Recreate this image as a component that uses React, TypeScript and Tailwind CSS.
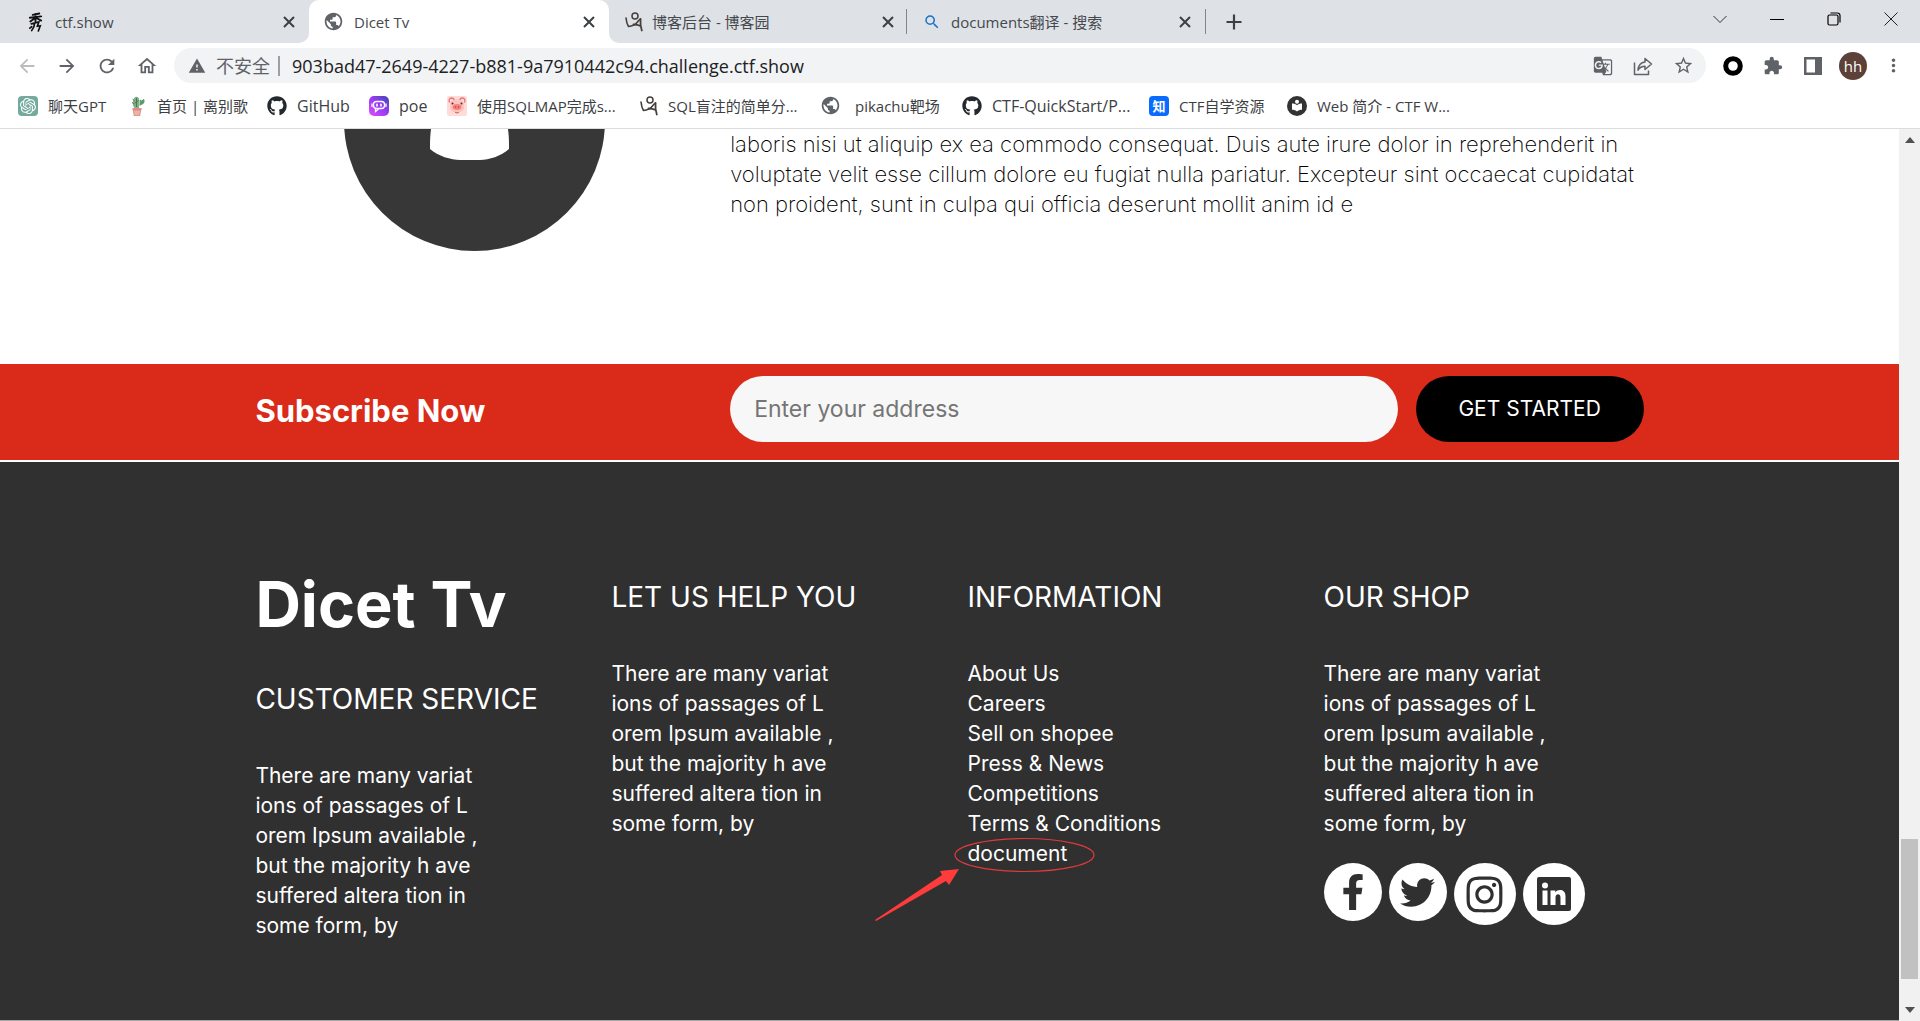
import type { ReactNode } from 'react';
import {
  MdArrowBack,
  MdArrowForward,
  MdRefresh,
  MdOutlineHome,
  MdWarning,
  MdGTranslate,
  MdStarBorder,
  MdExtension,
  MdMoreVert,
  MdPublic,
  MdSearch,
} from 'react-icons/md';
import { FaGithub, FaTwitter, FaFacebookF, FaInstagram } from 'react-icons/fa';
import { SiOpenai } from 'react-icons/si';

function CloseIcon() {
  return (
    <svg viewBox="0 0 12 12" className="size-3" stroke="#3c4043" strokeWidth="2" fill="none">
      <path d="M1 1l10 10M11 1L1 11" />
    </svg>
  );
}

function BrushIcon() {
  return (
    <svg viewBox="0 0 18 20" className="h-5 w-[17px]" stroke="#111" strokeWidth="2" fill="none" strokeLinecap="round">
      <path d="M6 2.500l7-1.500M3 5.500l12-1.500M9 1.500v8M9 5.500L3.500 9.500M9.500 5.500l5.500 3" />
      <path d="M4.500 12l8-2-1.500 4.500 3-.5-2 5.500M8 11.500c0 3-1 5-3 7.500M5 15l-2 1.500" strokeWidth="1.800" />
    </svg>
  );
}

function CnblogsIcon() {
  return (
    <svg viewBox="0 0 18 20" className="h-5 w-[18px]" fill="none" stroke="#46403c" strokeLinecap="round" strokeLinejoin="round">
      <circle cx="10" cy="4" r="3" strokeWidth="1.500" />
      <path d="M1 6c.3 3 1 6 2.500 8.500 3.500-.3 7-2 9-4.500 1-1.200 2-2.500 3-3" strokeWidth="1.600" />
      <path d="M15.500 7c-.3 4 .2 8 1.300 11.500M8.500 12.500c2.500 0 5 .5 7 1.500" strokeWidth="1.800" />
    </svg>
  );
}

function CactusIcon() {
  return (
    <svg viewBox="0 0 16 20" className="h-5 w-[18px]">
      <path d="M4 2.500C5 0 8.500 0 9 3v9H4.500C2 9 2.500 5 4 2.500z" fill="#7fae86" />
      <path d="M9.500 9V5c0-1.500 2-1.500 2-.2L13.500 3c1.500.3 1.500 4-.5 5l-3.500 2z" fill="#5f9a6d" />
      <path d="M2 6.500l2.500 1.500M2.500 3l2 1.500M6.500 2v9M8.500 4.500L5 7" stroke="#3d6b48" strokeWidth=".8" />
      <path d="M2.500 12h9v2.200h-9z" fill="#e58f86" />
      <path d="M3.300 14.200h7.400L9.800 20H4.200z" fill="#f0b0a6" stroke="#b5665d" strokeWidth=".5" />
    </svg>
  );
}

function PoeIcon() {
  return (
    <svg viewBox="0 0 20 20" className="size-5">
      <defs>
        <linearGradient id="poe" x1="1" y1="0" x2="0" y2="1">
          <stop offset="0" stopColor="#3f45b5" />
          <stop offset=".5" stopColor="#9a3cf5" />
          <stop offset="1" stopColor="#e54cff" />
        </linearGradient>
      </defs>
      <rect width="20" height="20" rx="5" fill="url(#poe)" />
      <rect x="4.500" y="5.500" width="11" height="7" rx="3" fill="none" stroke="#fff" strokeWidth="1.300" />
      <path d="M3 8v2.500M17 8v2.500M6.500 12.500v3l3-2.500" stroke="#fff" strokeWidth="1.300" fill="none" strokeLinecap="round" />
      <path d="M8 8.300v1.600M12 8.300v1.600" stroke="#fff" strokeWidth="1.600" strokeLinecap="round" />
    </svg>
  );
}

function PigIcon() {
  return (
    <svg viewBox="0 0 20 20" className="size-5">
      <rect width="20" height="20" rx="2" fill="#ffdcda" />
      <path d="M2.500 6.500C1.500 4 2.500 2 4.500 2c1.200 0 2.500 1 3 2M17.500 6.500C18.500 4 17.500 2 15.500 2c-1.200 0-2.500 1-3 2" stroke="#e8726c" strokeWidth="1.300" fill="none" />
      <path d="M3 8c0-6 14-6 14 0v4c0 6-14 6-14 0z" fill="#ffc2be" />
      <circle cx="5.500" cy="7.500" r="1" fill="#43302f" />
      <circle cx="14.500" cy="7.500" r="1" fill="#43302f" />
      <ellipse cx="10" cy="11" rx="4.500" ry="3" fill="#f4827c" />
      <circle cx="8.500" cy="11" r=".8" fill="#b8403c" />
      <circle cx="11.500" cy="11" r=".8" fill="#b8403c" />
      <path d="M8 16c1 1.200 3 1.200 4 0" stroke="#d5504a" fill="none" />
    </svg>
  );
}

function WikiIcon() {
  return (
    <svg viewBox="0 0 20 20" className="size-5">
      <circle cx="10" cy="10" r="10" fill="#333" />
      <circle cx="10" cy="5.800" r="2" fill="#fff" />
      <path d="M5 7.500c2 0 4 .6 5 1.800 1-1.200 3-1.800 5-1.800v6.200c-2 0-4 .6-5 1.800-1-1.200-3-1.800-5-1.800z" fill="#fff" />
    </svg>
  );
}

function ShareIcon() {
  return (
    <svg viewBox="0 0 20 20" className="size-5" fill="none" stroke="#5f6368" strokeWidth="1.500" strokeLinejoin="round">
      <path d="M1.500 6.500v12h14v-4" />
      <path d="M12 2.500l6.500 5.500L12 13.500v-3.300c-3.500 0-5.500 1.300-7 4 .3-4.500 2.600-7.700 7-8.200z" />
    </svg>
  );
}

function LinkedinGlyph() {
  return (
    <svg viewBox="0 0 34 34" className="size-[34px]">
      <rect width="34" height="34" rx="2" fill="#303030" />
      <g fill="#fff">
        <circle cx="8" cy="8.500" r="3" />
        <path d="M5.500 13.500h5V28h-5zM13.500 13.500h4.800v2c2.600-3.800 10.200-3.400 10.200 3.500v9h-5v-7.500c0-4.500-5-4-5 0V28h-5z" />
      </g>
    </svg>
  );
}

function Tab({ icon, title, shape }: { icon: ReactNode; title: string; shape: string }) {
  return (
    <div role="tab" className={`flex h-full items-center ${shape}`}>
      {icon}
      <span className="min-w-0 flex-1 truncate text-[15px] leading-5 text-[#45494d]">{title}</span>
      <button aria-label={`Close ${title}`}>
        <CloseIcon />
      </button>
    </div>
  );
}

function Bookmark({ icon, label, size }: { icon: ReactNode; label: string; size: string }) {
  return (
    <a href="#" className="flex items-center gap-2.5 text-[#3c4043]">
      {icon}
      <span className={`whitespace-nowrap leading-5 ${size}`}>{label}</span>
    </a>
  );
}

const bookmarks = [
  {
    label: '聊天GPT',
    size: 'text-[15px] w-[61px]',
    icon: (
      <span className="flex size-5 items-center justify-center rounded bg-[#74aa9c]">
        <SiOpenai size={16} color="#fff" />
      </span>
    ),
  },
  { label: '首页 | 离别歌', size: 'text-[15px] w-[90px]', icon: <CactusIcon /> },
  { label: 'GitHub', size: 'text-base w-[52px]', icon: <FaGithub size={20} color="#24292f" /> },
  { label: 'poe', size: 'text-base w-[28px]', icon: <PoeIcon /> },
  { label: '使用SQLMAP完成s...', size: 'text-[15px] w-[143px]', icon: <PigIcon /> },
  { label: 'SQL盲注的简单分...', size: 'text-[15px] w-[132px]', icon: <CnblogsIcon /> },
  { label: 'pikachu靶场', size: 'text-[15px] ml-1 w-[87px]', icon: <MdPublic size={21} color="#5f6368" /> },
  { label: 'CTF-QuickStart/P...', size: 'text-base w-[137px]', icon: <FaGithub size={20} color="#24292f" /> },
  {
    label: 'CTF自学资源',
    size: 'text-[15px] w-[88px]',
    icon: (
      <span className="flex size-5 items-center justify-center rounded bg-[#0a6cff] text-[13px] leading-5 font-bold text-white">
        知
      </span>
    ),
  },
  { label: 'Web 简介 - CTF W...', size: 'text-[15px] w-[142px]', icon: <WikiIcon /> },
];

function BrowserChrome() {
  return (
    <header className="border-b border-[#dadce0] bg-white font-['Open_Sans','Noto_Sans_CJK_SC',sans-serif]">
      <div className="flex h-[43px] items-stretch bg-[#dee1e6]">
        <div role="tablist" className="flex">
          <Tab icon={<BrushIcon />} title="ctf.show" shape="w-[309px] gap-[11px] pr-3.5 pl-[27px]" />
          <div className="relative">
            <svg viewBox="0 0 10 10" className="absolute bottom-0 -left-2.5 size-2.5" fill="#fff">
              <path d="M10 0v10H0A10 10 0 0 0 10 0z" />
            </svg>
            <Tab
              icon={<MdPublic size={21} color="#5f6368" />}
              title="Dicet Tv"
              shape="w-[300px] gap-2.5 rounded-t-[10px] bg-white pr-3.5 pl-3.5"
            />
            <svg viewBox="0 0 10 10" className="absolute -right-2.5 bottom-0 size-2.5" fill="#fff">
              <path d="M0 0v10h10A10 10 0 0 1 0 0z" />
            </svg>
          </div>
          <Tab icon={<CnblogsIcon />} title="博客后台 - 博客园" shape="w-[297px] gap-[9px] pr-3 pl-4" />
          <span className="h-[25px] w-px self-center bg-[#80868b]" />
          <Tab icon={<MdSearch size={18} color="#1a73c8" />} title="documents翻译 - 搜索" shape="w-[298px] gap-2.5 pr-3.5 pl-4" />
          <span className="h-[25px] w-px self-center bg-[#80868b]" />
        </div>
        <button aria-label="New tab" className="ml-5">
          <svg viewBox="0 0 16 16" className="size-4" stroke="#3c4043" strokeWidth="2.200">
            <path d="M8 .5v15M.5 8h15" />
          </svg>
        </button>
        <div className="ml-auto flex items-center gap-[43px] pr-[22px] pb-[5px]">
          <button aria-label="Search tabs">
            <svg viewBox="0 0 14 14" className="size-3.5" fill="none" stroke="#333">
              <path d="M.5 4L7 10.500 13.500 4" />
            </svg>
          </button>
          <button aria-label="Minimize">
            <svg viewBox="0 0 14 14" className="size-3.5" stroke="#000">
              <path d="M0 7.500h14" />
            </svg>
          </button>
          <button aria-label="Restore">
            <svg viewBox="0 0 14 14" className="size-3.5" fill="none" stroke="#000" strokeWidth="1.200">
              <rect x="1" y="3" width="10" height="10" rx="1.500" />
              <path d="M3.500 1h7A2.500 2.500 0 0 1 13 3.500v7" />
            </svg>
          </button>
          <button aria-label="Close window">
            <svg viewBox="0 0 14 14" className="size-3.5" stroke="#222">
              <path d="M.5.5l13 13M13.500.5l-13 13" />
            </svg>
          </button>
        </div>
      </div>

      <div className="flex items-center pt-[5px] pr-4 pl-4 text-[#5f6368]">
        <nav className="flex gap-[18px]">
          <button aria-label="Back" className="text-[#babcbe]"><MdArrowBack size={22} /></button>
          <button aria-label="Forward"><MdArrowForward size={22} /></button>
          <button aria-label="Reload"><MdRefresh size={22} /></button>
          <button aria-label="Home"><MdOutlineHome size={22} /></button>
        </nav>
        <div className="ml-4 flex h-[35px] flex-1 items-center rounded-full bg-[#f1f3f4] pr-3 pl-3.5">
          <MdWarning size={18} />
          <span className="ml-2.5 text-lg leading-6">不安全</span>
          <span className="mx-2 h-5 w-0.5 bg-[#9aa0a6]" />
          <input
            aria-label="Address"
            defaultValue="903bad47-2649-4227-b881-9a7910442c94.challenge.ctf.show"
            className="min-w-0 flex-1 bg-transparent pl-1 text-lg leading-6 text-[#202124] outline-none"
          />
          <div className="flex gap-5">
            <button aria-label="Translate"><MdGTranslate size={20} /></button>
            <button aria-label="Share"><ShareIcon /></button>
            <button aria-label="Bookmark"><MdStarBorder size={21} /></button>
          </div>
        </div>
        <div className="ml-[17px] flex items-center gap-5">
          <button aria-label="Recorder">
            <svg viewBox="0 0 20 20" className="size-5">
              <circle cx="10" cy="10" r="7.300" fill="#fff" stroke="#000" strokeWidth="5" />
            </svg>
          </button>
          <button aria-label="Extensions"><MdExtension size={20} /></button>
          <button aria-label="Side panel">
            <svg viewBox="0 0 20 20" className="size-5" fill="#5f6368">
              <path d="M1 1h18v18H1zM3.500 3.500v13H12v-13z" fillRule="evenodd" />
            </svg>
          </button>
          <button className="-mx-1 flex size-7 items-center justify-center rounded-full bg-[#5d4037] text-[15px] leading-5 text-white">
            hh
          </button>
          <button aria-label="Menu"><MdMoreVert size={21} /></button>
        </div>
      </div>

      <nav className="flex h-[45px] items-center gap-5 pl-[18px]">
        {bookmarks.map((b) => (
          <Bookmark key={b.label} {...b} />
        ))}
      </nav>
    </header>
  );
}

function Intro() {
  return (
    <section className="mx-auto grid w-3/4 grid-cols-12 pb-28">
      <div className="col-span-4 flex justify-center">
        <svg viewBox="0 0 261 123" className="h-[123px] w-[261px]" role="img" aria-label="Profile">
          <circle cx="130.500" cy="-8.500" r="130.500" fill="#373737" />
          <path d="M87 0h77c1 7 1 14 1 20-8 7-20 11-29 11h-20c-9 0-22-4-30-11 0-6 0-13 1-20z" fill="#fff" />
        </svg>
      </div>
      <p className="col-span-8 px-[18px] text-[22px] leading-[30px] font-extralight whitespace-nowrap text-black">
        laboris nisi ut aliquip ex ea commodo consequat. Duis aute irure dolor in reprehenderit in
        <br />
        voluptate velit esse cillum dolore eu fugiat nulla pariatur. Excepteur sint occaecat cupidatat
        <br />
        non proident, sunt in culpa qui officia deserunt mollit anim id e
      </p>
    </section>
  );
}

function Subscribe() {
  return (
    <section className="border-b-2 border-white bg-[#d92a1a]">
      <form className="mx-auto grid w-3/4 grid-cols-12 items-center pt-3 pb-[18px]">
        <label htmlFor="address" className="col-span-4 px-[18px] pt-1 text-[31px] leading-10 font-bold text-white">
          Subscribe Now
        </label>
        <div className="col-span-8 flex gap-[18px] px-[18px]">
          <input
            id="address"
            placeholder="Enter your address"
            className="h-[66px] min-w-0 flex-1 rounded-full bg-[#f7f7f7] px-6 text-[23px] text-[#757575] outline-none placeholder:text-[#757575]"
          />
          <button type="button" className="h-[66px] w-[228px] rounded-full bg-black text-[21px] text-white">
            GET STARTED
          </button>
        </div>
      </form>
    </section>
  );
}

function Heading({ children }: { children: ReactNode }) {
  return <h3 className="mb-[41px] text-[28px] leading-[42px] whitespace-nowrap">{children}</h3>;
}

function Blurb() {
  return (
    <p className="whitespace-nowrap">
      There are many variat
      <br />
      ions of passages of L
      <br />
      orem Ipsum available ,
      <br />
      but the majority h ave
      <br />
      suffered altera tion in
      <br />
      some form, by
    </p>
  );
}

const links = ['About Us', 'Careers', 'Sell on shopee', 'Press & News', 'Competitions', 'Terms & Conditions'];

function Footer() {
  return (
    <footer className="flex-1 border-b border-[#a5a5a5] bg-[#303030] text-[21px] leading-[30px] text-white">
      <div className="mx-auto grid w-3/4 grid-cols-4 pt-[110px]">
        <div className="px-[18px]">
          <h2 className="mb-[42px] text-[63px] leading-[64px] font-bold whitespace-nowrap">Dicet Tv</h2>
          <Heading>CUSTOMER SERVICE</Heading>
          <Blurb />
        </div>
        <div className="px-[18px] pt-1">
          <Heading>LET US HELP YOU</Heading>
          <Blurb />
        </div>
        <div className="px-[18px] pt-1">
          <Heading>INFORMATION</Heading>
          <ul>
            {links.map((l) => (
              <li key={l}>
                <a href="#">{l}</a>
              </li>
            ))}
            <li className="relative">
              <a href="#">document</a>
              <svg viewBox="0 0 222 86" className="pointer-events-none absolute -top-0.5 -left-[93px] h-[86px] w-[222px]">
                <ellipse cx="149.500" cy="18" rx="69.500" ry="16.500" fill="none" stroke="#e03a3a" strokeWidth="1.200" />
                <path d="M0 83L67 38l-2-4 19-2-10 16-3-4L1 84z" fill="#ff3b3b" />
              </svg>
            </li>
          </ul>
        </div>
        <div className="px-[18px] pt-1">
          <Heading>OUR SHOP</Heading>
          <Blurb />
          <div className="mt-6 flex gap-[7px] text-[#303030]">
            <a href="#" aria-label="Facebook" className="flex size-[58px] items-center justify-center rounded-full bg-white">
              <FaFacebookF size={36} />
            </a>
            <a href="#" aria-label="Twitter" className="flex size-[58px] items-center justify-center rounded-full bg-white">
              <FaTwitter size={35} />
            </a>
            <a href="#" aria-label="Instagram" className="flex size-[62px] items-center justify-center rounded-full bg-white">
              <FaInstagram size={41} />
            </a>
            <a href="#" aria-label="LinkedIn" className="flex size-[62px] items-center justify-center rounded-full bg-white">
              <LinkedinGlyph />
            </a>
          </div>
        </div>
      </div>
    </footer>
  );
}

function Scrollbar() {
  return (
    <div className="flex w-[21px] flex-col items-center justify-between bg-[#f1f1f1] py-2">
      <svg viewBox="0 0 10 6" className="h-1.5 w-2.5" fill="#505050">
        <path d="M0 6l5-6 5 6z" />
      </svg>
      <div className="flex flex-col items-center gap-7">
        <div className="h-[140px] w-[17px] bg-[#c1c1c1]" />
        <svg viewBox="0 0 10 6" className="h-1.5 w-2.5" fill="#505050">
          <path d="M0 0l5 6 5-6z" />
        </svg>
      </div>
    </div>
  );
}

export default function App() {
  return (
    <div className="flex min-h-screen flex-col bg-white">
      <BrowserChrome />
      <div className="flex flex-1">
        <main className="flex min-w-0 flex-1 flex-col font-[Inter,sans-serif]">
          <Intro />
          <Subscribe />
          <Footer />
        </main>
        <Scrollbar />
      </div>
    </div>
  );
}
